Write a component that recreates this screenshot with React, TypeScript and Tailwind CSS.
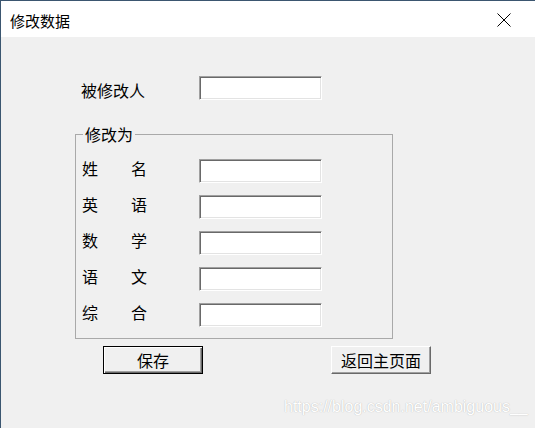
import React from 'react';

const cjk = { fontFamily: '"SimSun", "Noto Sans CJK SC", sans-serif' };

function Field() {
  return (
    <div className="w-[123px] h-[24px] bg-white border border-t-[#a0a0a0] border-l-[#a0a0a0] border-r-white border-b-white shadow-[inset_1px_1px_0_#696969,inset_-1px_-1px_0_#e3e3e3]" />
  );
}

function Row({ a, b }: { a: string; b: string }) {
  return (
    <div className="flex items-start h-[24px]">
      <span className="w-[54px] pl-[5px] pt-[1px] text-[16px] leading-none">{a}</span>
      <span className="w-[68px] pt-[1px] text-[16px] leading-none">{b}</span>
      <Field />
    </div>
  );
}

export default function App() {
  const rows = [
    ['姓', '名'],
    ['英', '语'],
    ['数', '学'],
    ['语', '文'],
    ['综', '合'],
  ];

  return (
    <div
      className="relative w-[535px] h-[428px] overflow-hidden bg-[#f0f0f0] border-l border-t border-[#3b5670] text-black"
      style={cjk}
    >
      {/* title bar */}
      <div className="h-[36px] bg-white flex items-center justify-between pl-[9px] pr-[24px]">
        <span className="text-[15px] leading-none pt-[2px]">修改数据</span>
        <svg width="14" height="14" viewBox="0 0 14 14" className="mt-[2px]">
          <path d="M0.5 0.5 L13.5 13.5 M13.5 0.5 L0.5 13.5" stroke="#000" strokeWidth="1" fill="none" />
        </svg>
      </div>

      {/* body */}
      <div className="pt-[39px] pl-[74px]">
        <div className="flex items-center h-[24px]">
          <span className="w-[124px] pl-[6px] text-[16px] leading-none pt-[4px]">被修改人</span>
          <Field />
        </div>

        <fieldset className="mt-[26px] w-[318px] h-[213px] border border-[#a9a9a9] pl-[1px] pb-[9px]">
          <legend className="ml-[6px] px-[2px] text-[16px] leading-[17px]">修改为</legend>
          <div className="mt-[16px] flex flex-col gap-[12px]">
            {rows.map(([a, b]) => (
              <Row key={a + b} a={a} b={b} />
            ))}
          </div>
        </fieldset>

        <div className="flex mt-[7px]">
          <button className="ml-[28px] w-[100px] h-[28px] bg-[#f0f0f0] border border-black shadow-[inset_1px_1px_0_#fff,inset_-1px_-1px_0_#696969,inset_-2px_-2px_0_#a0a0a0] text-[16px] leading-none">
            保存
          </button>
          <button className="ml-[128px] w-[100px] h-[28px] bg-[#f0f0f0] border border-t-white border-l-white border-r-[#696969] border-b-[#696969] shadow-[inset_-1px_-1px_0_#a0a0a0] text-[16px] leading-none">
            返回主页面
          </button>
        </div>
      </div>

      {/* watermark */}
      <span
        className="absolute left-[283px] top-[396px] text-[16px] leading-[19px] text-white [text-shadow:0_0_1px_#a8a8a8]"
        style={{ fontFamily: '"Liberation Sans", Arial, sans-serif' }}
      >
        https://blog.csdn.net/ambiguous__
      </span>
    </div>
  );
}
